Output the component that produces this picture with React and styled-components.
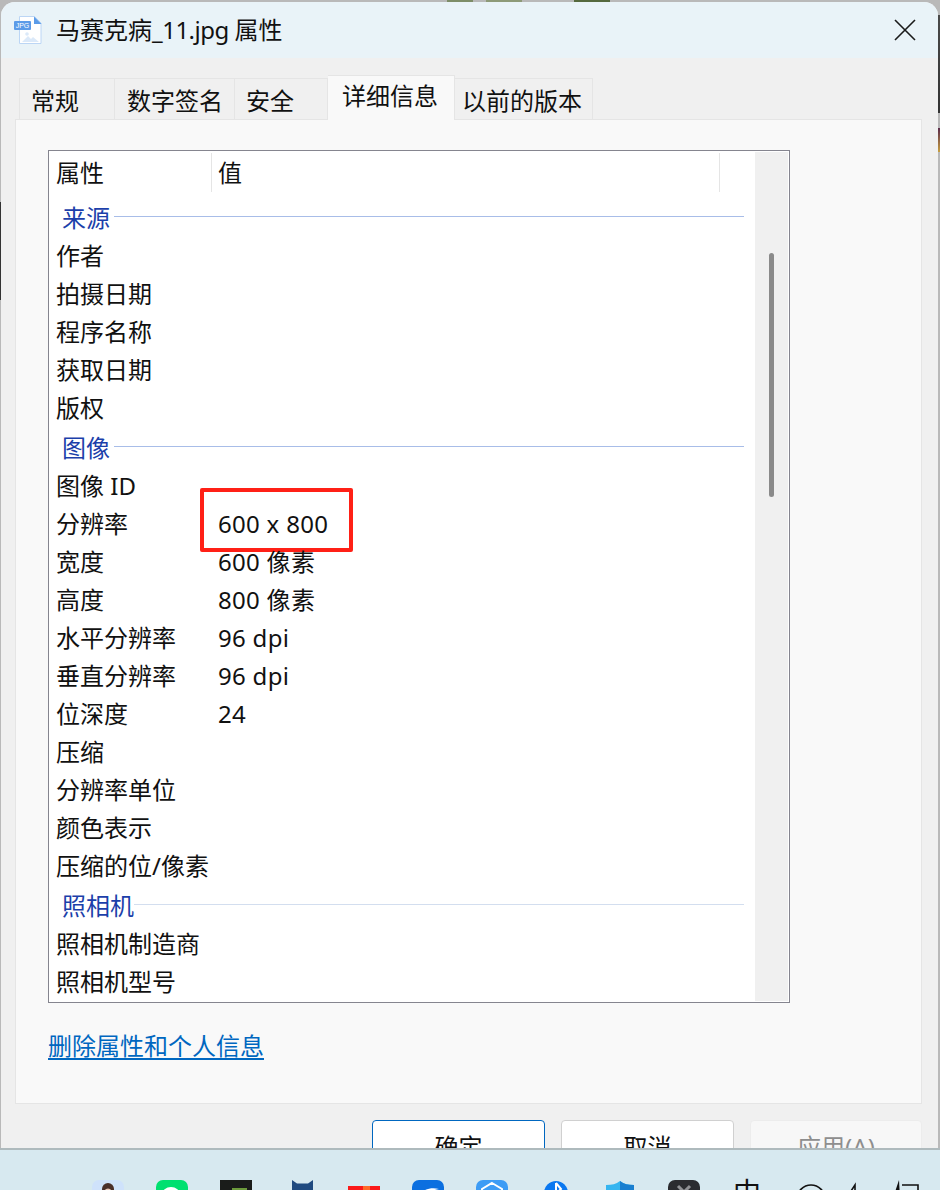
import styled, { createGlobalStyle } from 'styled-components'

const GlobalStyle = createGlobalStyle`
  html, body {
    margin: 0;
    padding: 0;
    background: #b9b9b9;
  }
  * {
    box-sizing: border-box;
  }
`

// Desktop peeking out round the dialog
const Page = styled.div`
  width: 940px;
  height: 1190px;
  overflow: hidden;
  display: flex;
  flex-direction: column;
  font-family: "Noto Sans", "Noto Sans CJK SC", sans-serif;
  font-size: 24px;
  color: #111;
`

const Desktop = styled.div`
  height: 1148px;
  flex-shrink: 0;
  padding: 2px 2px 0 1px;
  background:
    linear-gradient(#4a4a4a, #333) 938px 15px / 2px 98px no-repeat,
    linear-gradient(#5a2a4a, #c8a040) 938px 128px / 2px 24px no-repeat,
    linear-gradient(#333, #333) 0 202px / 1px 98px no-repeat,
    linear-gradient(#7d8d68, #7d8d68) 447px 0 / 26px 2px no-repeat,
    linear-gradient(#8d9a78, #8d9a78) 486px 0 / 36px 2px no-repeat,
    linear-gradient(#55693e, #55693e) 574px 0 / 36px 2px no-repeat,
    #b9b9b9;
`

const Window = styled.div`
  height: 100%;
  overflow: hidden;
  background: #f0f0f0;
  border-radius: 14px 14px 0 0;
`

const TitleBar = styled.div`
  height: 56px;
  display: flex;
  align-items: center;
  padding: 0 22px 0 13px;
  background: #e9f3f8;
`

const TitleText = styled.div`
  margin-left: 14px;
  flex: 1;
  line-height: 56px;
`

const TitleLatin = styled.span`
  letter-spacing: -0.5px;
`

const CloseButton = styled.svg`
  width: 22px;
  height: 22px;
  display: block;
`

const TabRow = styled.div`
  height: 61px;
  padding-left: 18px;
  display: flex;
  align-items: flex-end;
`

const Tab = styled.div`
  position: relative;
  width: ${(props) => props.$width}px;
  height: ${(props) => (props.$active ? 45 : 42)}px;
  margin-bottom: -1px;
  padding-left: ${(props) => props.$pad}px;
  line-height: ${(props) => (props.$active ? 39 : 43)}px;
  white-space: nowrap;
  background: ${(props) => (props.$active ? '#f9f9f9' : '#f0f0f0')};
  border: 1px solid #e5e5e5;
  border-bottom: ${(props) => (props.$active ? 'none' : '1px solid #e5e5e5')};
  border-left-width: ${(props) => (props.$first ? 1 : 0)}px;
  z-index: ${(props) => (props.$active ? 1 : 0)};
`

const TabPanel = styled.div`
  margin-left: 14px;
  width: 907px;
  height: 985px;
  padding: 30px 0 0 32px;
  background: #f9f9f9;
  border: 1px solid #e5e5e5;
`

const ListBox = styled.div`
  width: 742px;
  height: 853px;
  padding: 1px;
  display: flex;
  overflow: hidden;
  background: #fff;
  border: 1px solid #85858f;
`

const ListBody = styled.div`
  width: 705px;
  flex-shrink: 0;
  padding-top: 1px;
`

const HeaderRow = styled.div`
  height: 39px;
  display: flex;
`

const HeaderCell = styled.div`
  width: ${(props) => props.$width}px;
  padding-left: ${(props) => props.$pad}px;
  line-height: 39px;
  border-right: 1px solid #e5e5e5;
`

const GroupRow = styled.div`
  width: 694px;
  height: ${(props) => props.$height}px;
  margin-top: ${(props) => props.$top}px;
  padding: 0 0 4px 12px;
  display: flex;
  align-items: center;
  gap: ${(props) => props.$gap}px;
  color: #1c3faa;
  white-space: nowrap;
`

const GroupLine = styled.span`
  flex: 1;
  height: 1px;
  background: ${(props) => props.$color};
`

const Row = styled.div`
  height: 38px;
  padding-bottom: 1px;
  display: flex;
  align-items: center;
  line-height: 38px;
`

const NameCell = styled.div`
  width: 168px;
  padding-left: 6px;
  white-space: nowrap;
`

const ValueCell = styled.div`
  position: relative;
  white-space: nowrap;
  letter-spacing: 0.3px;
`

// Red annotation drawn on top of the screenshot
const Highlight = styled.span`
  position: absolute;
  left: -18px;
  top: -17px;
  width: 153px;
  height: 64px;
  border: 4px solid #ff2016;
  border-radius: 2px;
`

const ScrollTrack = styled.div`
  width: 33px;
  flex-shrink: 0;
  padding: 101px 0 0 14px;
  background: #f0f0f0;
`

const ScrollThumb = styled.div`
  width: 5px;
  height: 244px;
  border-radius: 3px;
  background: #8a8a8a;
`

const RemoveLink = styled.a`
  display: block;
  margin-top: 26px;
  line-height: 34px;
  color: #0067c0;
  text-decoration: underline;
  text-underline-offset: 3px;
`

const ButtonRow = styled.div`
  display: flex;
  gap: 16px;
  padding: 16px 0 0 371px;
`

const DialogButton = styled.div`
  width: ${(props) => props.$width}px;
  height: 56px;
  flex-shrink: 0;
  text-align: center;
  line-height: 52px;
  border-radius: 4px;
  color: ${(props) => (props.$disabled ? '#8e8e8e' : '#111')};
  background: ${(props) => (props.$disabled ? '#f7f7f7' : '#fff')};
  border: 1px solid ${(props) => (props.$primary ? '#0067c0' : props.$disabled ? '#ececec' : '#d0d0d0')};
`

const Taskbar = styled.div`
  height: 42px;
  flex-shrink: 0;
  display: flex;
  padding: 30px 0 0 92px;
  background: #d7e9f0;
  border-top: 2px solid #aebabd;
  overflow: hidden;
`

const TaskIcons = styled.div`
  display: flex;
  gap: 32px;
  flex-shrink: 0;
`

const TaskIcon = styled.svg`
  width: 32px;
  height: 32px;
  display: block;
  flex-shrink: 0;
`

const TrayIcon = styled(TaskIcon)`
  margin-left: ${(props) => props.$left}px;
`

const Tray = styled.div`
  margin-left: 33px;
  display: flex;
  flex-shrink: 0;
`

const ImeLabel = styled.div`
  margin-top: -4px;
  font-size: 28px;
  line-height: 32px;
`

const tabs = [
  { label: '常规', width: 96, pad: 11 },
  { label: '数字签名', width: 120, pad: 12 },
  { label: '安全', width: 93, pad: 11 },
  { label: '详细信息', width: 127, pad: 14, active: true },
  { label: '以前的版本', width: 138, pad: 7 },
]

const rows = [
  { group: '来源', top: 7, height: 38, gap: 4, line: '#a8bde8' },
  { name: '作者' },
  { name: '拍摄日期' },
  { name: '程序名称' },
  { name: '获取日期' },
  { name: '版权' },
  { group: '图像', top: 3, height: 37, gap: 4, line: '#a8bde8' },
  { name: '图像 ID' },
  { name: '分辨率', value: '600 x 800', marked: true },
  { name: '宽度', value: '600 像素' },
  { name: '高度', value: '800 像素' },
  { name: '水平分辨率', value: '96 dpi' },
  { name: '垂直分辨率', value: '96 dpi' },
  { name: '位深度', value: '24' },
  { name: '压缩' },
  { name: '分辨率单位' },
  { name: '颜色表示' },
  { name: '压缩的位/像素' },
  { group: '照相机', top: 2, height: 38, gap: 0, line: '#d3deef' },
  { name: '照相机制造商' },
  { name: '照相机型号' },
]

function FileIcon() {
  return (
    <svg width="28" height="28" viewBox="0 0 28 28">
      <path d="M5.5 0.5h15l6.5 6.5v20.5h-21.500z" fill="#fff" stroke="#bcd6f5" strokeWidth="1" />
      <path d="M20 0.500v7.500h7.500z" fill="#5b9be8" />
      <rect x="0" y="5" width="17" height="9" rx="1" fill="#5b9be8" />
      <text x="8.500" y="12.400" textAnchor="middle" fontSize="7" fontFamily="Liberation Sans" fill="#fff">JPG</text>
      <circle cx="13" cy="18" r="1.800" fill="#dbe9f9" />
      <path d="M8 26l6-6 3 3 2-2 6 5z" fill="#dbe9f9" />
    </svg>
  )
}

const taskDrawings = [
  <>
    <rect width="32" height="32" rx="7" fill="#cfe2fb" />
    <circle cx="16" cy="9" r="6" fill="#4a2f2a" />
    <circle cx="16" cy="12" r="3.500" fill="#e8c4b4" />
  </>,
  <>
    <rect width="32" height="32" rx="7" fill="#00e070" />
    <ellipse cx="15" cy="15" rx="9" ry="8" fill="#fff" />
  </>,
  <>
    <rect width="32" height="32" fill="#1a1c1a" />
    <rect x="12" y="8" width="15" height="16" fill="#6c9a3c" />
  </>,
  <path d="M8 32V0l5 3.500h11L29 0v32z" fill="#1f4a80" />,
  <>
    <rect y="6" width="15" height="26" fill="#fb1a1a" />
    <path d="M15 6h7v26h-7z" fill="#ff6a2a" />
    <rect x="22" y="6" width="10" height="26" fill="#fb1a1a" />
  </>,
  <>
    <rect width="32" height="32" rx="7" fill="#0b6fe0" />
    <path d="M6 16c5-7 13-9 21-7-6 1-10 3-13 7z" fill="#fff" />
  </>,
  <>
    <rect width="32" height="32" rx="7" fill="#3d9cf5" />
    <path d="M16 3l10 6v10H6V9z" fill="none" stroke="#fff" strokeWidth="2" />
  </>,
  <>
    <circle cx="16" cy="13" r="12" fill="#0a78f0" />
    <path d="M16 3l5 6-5 5" fill="none" stroke="#fff" strokeWidth="2" />
    <path d="M16 3v22" stroke="#fff" strokeWidth="2" />
  </>,
  <>
    <path d="M2 5c6 0 10-1 14-4 4 3 8 4 14 4v27H2z" fill="#35b5f0" />
    <path d="M16 1c4 3 8 4 14 4v27H16z" fill="#1a7fd0" />
  </>,
  <>
    <rect width="32" height="32" rx="7" fill="#2b2c30" />
    <path d="M10 6l12 12M22 6L10 18" stroke="#8f9094" strokeWidth="3" />
  </>,
]

export default function App() {
  return (
    <Page>
      <GlobalStyle />
      <Desktop>
        <Window>
          <TitleBar>
            <FileIcon />
            <TitleText>马赛克病<TitleLatin>_11.jpg </TitleLatin>属性</TitleText>
            <CloseButton viewBox="0 0 22 22">
              <path d="M1 1l20 20M21 1L1 21" stroke="#1a1a1a" strokeWidth="1.6" fill="none" />
            </CloseButton>
          </TitleBar>
          <TabRow>
            {tabs.map((tab, i) => (
              <Tab key={tab.label} $width={tab.width} $pad={tab.pad} $active={tab.active} $first={i === 0}>
                {tab.label}
              </Tab>
            ))}
          </TabRow>
          <TabPanel>
            <ListBox>
              <ListBody>
                <HeaderRow>
                  <HeaderCell $width={162} $pad={6}>属性</HeaderCell>
                  <HeaderCell $width={508} $pad={6}>值</HeaderCell>
                </HeaderRow>
                {rows.map((row) =>
                  row.group ? (
                    <GroupRow key={row.group} $top={row.top} $height={row.height} $gap={row.gap}>
                      {row.group}
                      <GroupLine $color={row.line} />
                    </GroupRow>
                  ) : (
                    <Row key={row.name}>
                      <NameCell>{row.name}</NameCell>
                      {row.value && (
                        <ValueCell>
                          {row.value}
                          {row.marked && <Highlight />}
                        </ValueCell>
                      )}
                    </Row>
                  ),
                )}
              </ListBody>
              <ScrollTrack>
                <ScrollThumb />
              </ScrollTrack>
            </ListBox>
            <RemoveLink>删除属性和个人信息</RemoveLink>
          </TabPanel>
          <ButtonRow>
            <DialogButton $width={173} $primary>确定</DialogButton>
            <DialogButton $width={173}>取消</DialogButton>
            <DialogButton $width={172} $disabled>应用(A)</DialogButton>
          </ButtonRow>
        </Window>
      </Desktop>
      <Taskbar>
        <TaskIcons>
          {taskDrawings.map((drawing, i) => (
            <TaskIcon key={i} viewBox="0 0 32 32">{drawing}</TaskIcon>
          ))}
        </TaskIcons>
        <Tray>
          <ImeLabel>中</ImeLabel>
          <TrayIcon $left={34} viewBox="0 0 32 32">
            <circle cx="16" cy="19" r="14" fill="none" stroke="#111" strokeWidth="1.6" />
          </TrayIcon>
          <TrayIcon $left={9} viewBox="0 0 32 32">
            <path d="M9 20L19 5v27" fill="none" stroke="#111" strokeWidth="1.6" />
          </TrayIcon>
          <TrayIcon $left={22} viewBox="0 0 32 32">
            <path d="M9 0L3 18h7z" fill="#111" />
            <path d="M12 5h16v27" fill="none" stroke="#111" strokeWidth="1.6" />
          </TrayIcon>
        </Tray>
      </Taskbar>
    </Page>
  )
}
